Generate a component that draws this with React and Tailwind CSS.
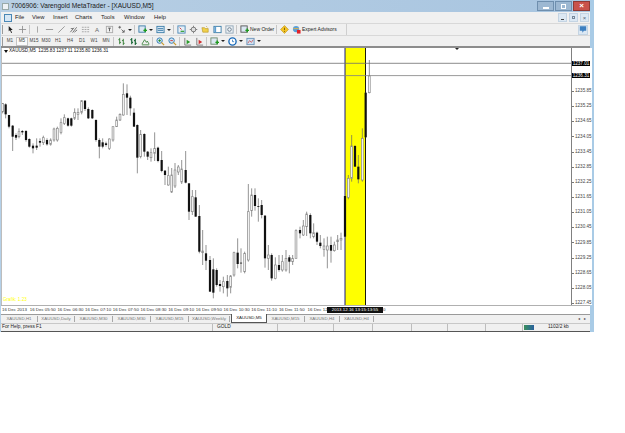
import React from "react";

const A = [[8,85,85,110,115,0],[17,85,88,118,130,1],[27,120,120,155,160,1],[38,150,152,185,228,1],[48,175,180,188,195,1],[57,160,170,185,190,0],[67,165,168,172,180,1],[78,165,168,195,200,1],[88,190,192,215,218,1],[99,205,212,220,235,1],[110,190,212,218,225,1],[120,190,198,203,215,1],[130,182,188,203,210,0],[141,190,195,208,212,1],[152,190,195,208,212,0],[162,158,162,195,200,0],[172,155,160,195,200,0],[183,130,143,172,178,0],[193,118,128,145,150,0],[204,128,130,152,155,1],[214,128,130,152,155,1],[224,100,112,130,135,0],[234,100,112,118,135,0],[245,75,77,112,118,0],[255,75,77,102,108,1],[265,97,102,130,132,1],[277,103,105,130,132,1],[288,133,135,195,200,1],[298,190,195,215,250,1],[308,190,202,215,220,1],[318,200,205,210,215,1],[328,190,192,220,225,0],[339,155,155,195,200,0],[350,125,135,155,155,0],[360,115,118,135,138,0],[370,25,58,120,122,0],[381,28,55,68,120,1],[391,62,68,100,122,1],[402,100,113,155,155,1],[412,148,150,248,295,1],[422,165,178,245,250,0],[433,175,177,230,245,1],[443,228,230,245,255,1],[453,220,233,248,260,0],[464,172,220,235,258,0],[474,215,218,258,262,1],[485,228,255,288,292,1],[495,285,287,300,330,1],[505,275,302,330,332,0]];
const B = [[47,-57,0,38,40,1],[57,40,40,125,150,1],[67,60,80,125,135,0],[77,60,82,140,140,1],[88,105,138,245,250,1],[98,180,243,248,285,0],[108,225,250,272,300,1],[120,258,270,365,365,1],[130,265,298,368,385,1],[140,295,300,345,350,1],[150,330,342,348,365,1],[160,320,335,350,370,0],[172,315,333,355,380,1],[182,315,318,352,370,0],[192,245,248,315,320,0],[203,205,248,282,295,1],[213,235,278,280,308,1],[224,245,250,305,310,0],[235,42,125,270,275,0],[245,55,75,122,140,0],[255,55,75,108,122,1],[265,85,108,108,155,1],[275,90,105,135,145,1],[285,135,137,265,293,1],[295,225,255,265,300,0],[305,250,255,325,332,1],[316,262,285,325,328,0],[327,255,285,300,305,1],[337,255,275,300,305,0],[348,240,265,300,305,0],[358,255,262,275,310,1],[368,255,265,275,285,0],[378,178,182,265,265,0],[390,170,180,190,205,1],[400,150,168,195,198,0],[410,125,132,170,198,0],[421,130,135,190,205,1],[431,160,188,200,205,0],[441,185,188,215,225,1],[451,195,218,228,235,1],[462,205,228,238,260,0],[472,200,228,240,295,0],[483,200,225,242,278,1],[493,215,225,242,245,0],[503,195,210,215,240,0],[513,188,205,210,240,0]];
const C = [[45,438,438,560,560,1],[55,375,385,442,448,0],[65,255,288,385,395,0],[75,285,288,350,350,1],[85,315,350,388,400,1],[97,235,265,390,395,0],[107,128,128,262,262,1],[118,30,78,128,130,0]];
const ABS = [[171.7,168,175,192,193,0],[175,163,170,186,188,0],[178.3,165,167,172,175,0],[181.7,160,169,182,184,0]];
const conv = (arr, ox, oy) => arr.map(([x, h, t, b, l, k]) => [ox + x / 3, oy + h / 3, oy + t / 3, oy + b / 3, oy + l / 3, k]);
const candles = [...conv(A, 0, 75), ...ABS, ...conv(B, 170, 170), ...conv(C, 330, 50)];

function Chart() {
  return (
    <svg className="block w-full h-full" viewBox="2 48 569 257" preserveAspectRatio="none">
      <rect x="345" y="48" width="20.5" height="257" fill="#ffff00" />
      <line x1="345" x2="345" y1="48" y2="305" stroke="#000080" strokeWidth="0.9" />
      <line x1="365.5" x2="365.5" y1="48" y2="305" stroke="#000" strokeWidth="0.9" />
      <line x1="2" x2="571" y1="63.3" y2="63.3" stroke="#6e6e6e" strokeWidth="0.8" />
      <line x1="2" x2="571" y1="75.6" y2="75.6" stroke="#808080" strokeWidth="0.8" />
      <path d="M455 48h4l-2 2z" fill="#222" />
      {candles.map(([x, h, t, b, l, k], i) => (
        <g key={i}>
          <line x1={x} x2={x} y1={h} y2={l} stroke="#666" strokeWidth="0.7" />
          {k ? (
            <rect x={x - 1.1} y={t} width="2.2" height={Math.max(b - t, 0.8)} fill="#111" />
          ) : (
            <rect x={x - 0.9} y={t} width="1.8" height={Math.max(b - t, 0.8)} fill="#fff" stroke="#888" strokeWidth="0.7" />
          )}
        </g>
      ))}
    </svg>
  );
}

const S = ({ children }) => (
  <svg viewBox="0 0 10 10" className="w-[9px] h-[9px] block" fill="none">{children}</svg>
);
const bars = <path d="M3 1v7M3 3H1.5M3 6h1.5M7 2v7M7 4H5.5M7 7h1.5" stroke="#2f7a2f" strokeWidth="1" />;
const doc = (c) => <><rect x="1" y="1" width="7" height="7" fill="#dbe7f2" stroke={c} /><path d="M6 6h4M8 4v4" stroke="#1e9b1e" strokeWidth="1.6" /></>;
const I = {
  cursor: <path d="M3 1l4.5 4.5H5.4l1.3 3-1 .4-1.2-3L3 7z" fill="#222" />,
  cross: <path d="M5 1v8M1 5h8" stroke="#888" strokeWidth="0.9" />,
  v: <path d="M5 1.5v7" stroke="#999" strokeWidth="0.9" />,
  h: <path d="M1 5h8" stroke="#888" strokeWidth="0.9" />,
  d: <path d="M1.5 8.5l7-7" stroke="#888" strokeWidth="0.9" />,
  fork: <path d="M1.5 8l4-5M4 8.5l4.5-6M6 8l3-2.5M2 4h3" stroke="#777" strokeWidth="1.1" />,
  grid: <path d="M1 2.5h8M1 5h8M1 7.5h8" stroke="#999" strokeWidth="0.9" strokeDasharray="2 1" />,
  tb: <><rect x="1.5" y="1.5" width="7" height="7" stroke="#aaa" /><path d="M3.5 3.5h3M5 3.5v3.5" stroke="#555" /></>,
  shapes: <path d="M1.5 2.5h3M3 1v3M5 5l3 3M8 5.5v2.5H5.5" stroke="#555" strokeWidth="0.9" />,
  newchart: doc("#3a7ca8"),
  profiles: <><rect x="1" y="1.5" width="8" height="7" fill="#d6e6f5" stroke="#3a7ca8" /><path d="M2 4h6M2 6h6" stroke="#3a7ca8" /></>,
  mw: <><rect x="1" y="1" width="8" height="8" fill="#e6f0f8" stroke="#4a87b5" /><path d="M3 3l2 2" stroke="#c33" /><path d="M4 7h4" stroke="#2a9a2a" strokeWidth="1.3" /></>,
  nav: <><circle cx="5" cy="5" r="2.6" fill="#ddd" stroke="#777" /><path d="M5 .8v2M5 7.2v2M.8 5h2M7.2 5h2" stroke="#777" /></>,
  folder: <><path d="M1 3h3l1 1h3v4H2z" fill="#f0d04a" stroke="#b9962a" strokeWidth="0.7" /><path d="M6 1.5l1 1" stroke="#c9a22a" /></>,
  win: <><rect x="1" y="1.5" width="8" height="7" fill="#fff" stroke="#3a7ca8" /><rect x="1.5" y="2" width="2" height="6" fill="#5f9fd0" /></>,
  search: <><rect x="1" y="1" width="8" height="8" fill="#eef3f7" stroke="#8fa5b5" /><circle cx="5" cy="5" r="2" stroke="#678" /></>,
  order: doc("#555"),
  diamond: <><path d="M5 .6l4.4 4.4L5 9.4.6 5z" fill="#f5c525" stroke="#b48a12" strokeWidth="0.6" /><path d="M5 3v2.6M5 6.6v1" stroke="#7a5a08" /></>,
  ea: <><circle cx="4.5" cy="4.5" r="3.5" fill="#5aa0d8" /><path d="M1.5 4h6" stroke="#e8b040" /><rect x="5.5" y="5.5" width="4" height="4" fill="#e0222a" /></>,
  bar: bars,
  bar2: <path d="M3 1v7M3 3H1.5M3 6h1.5M7 2v7M7 4H5.5M7 7h1.5" stroke="#1e6a3a" strokeWidth="1.3" />,
  line: <path d="M1 8l3-5 2 3 1-1.5L9 8M1 8.7h8" stroke="#2f7a2f" strokeWidth="0.9" />,
  zin: <><circle cx="4" cy="4" r="3" fill="#cfe4f5" stroke="#2a76b0" /><path d="M2.6 4h2.8M4 2.6v2.8" stroke="#1e8a1e" /><path d="M6 6l3 3" stroke="#c89a30" strokeWidth="1.4" /></>,
  zout: <><circle cx="4" cy="4" r="3" fill="#cfe4f5" stroke="#2a76b0" /><path d="M2.6 4h2.8" stroke="#c33" /><path d="M6 6l3 3" stroke="#c89a30" strokeWidth="1.4" /></>,
  shift: <><path d="M2 1v8h7" stroke="#666" strokeWidth="0.9" /><path d="M4 3l4 2.5L4 8z" fill="#2a9a2a" /></>,
  auto: <><path d="M2 1v8h7" stroke="#666" strokeWidth="0.9" /><path d="M4 3l4 2.5L4 8z" fill="#d03030" /></>,
  ind: doc("#6a8a6a"),
  clock: <><circle cx="5" cy="5" r="4" fill="#fff" stroke="#1668b8" strokeWidth="1.5" /><path d="M5 3v2.2h1.8" stroke="#1668b8" strokeWidth="0.8" /></>,
  tmpl: <><rect x="1" y="1.5" width="8" height="7" fill="#cfe2f3" stroke="#6a94b8" /><path d="M2 7l2-3 2 2 2-3" stroke="#c44" strokeWidth="0.8" /></>,
  chat: <path d="M1 1h8v5.5H6L4.5 9 4 6.5H1z" fill="#3d7fc0" />,
};

const T = ({ i }) => <div className="w-[12px] h-full flex items-center justify-center shrink-0"><S>{I[i]}</S></div>;
const Sep = () => <div className="w-[1px] h-[9px] bg-[#c6c6c6] mx-[1px] shrink-0" />;
const Drop = () => <div className="w-[5px] flex justify-center shrink-0 mr-[1px]"><div className="border-x-[2px] border-t-[2px] border-x-transparent border-t-[#222]" /></div>;
const Grip = () => <div className="w-[1px] h-[9px] bg-[#9a9a9a] mx-[1px] shrink-0" />;

const PRICES = ["1235.85","1235.25","1234.65","1234.05","1233.45","1232.85","1232.25","1231.65","1231.05","1230.45","1229.85","1229.25","1228.65","1228.05","1227.45"];
const TIMES = ["16 Dec 2013","16 Dec 05:50","16 Dec 06:30","16 Dec 07:10","16 Dec 07:50","16 Dec 08:30","16 Dec 09:10","16 Dec 09:50","16 Dec 10:30","16 Dec 11:10","16 Dec 11:50"];
const TABS = [["XAUUSD,H1","w-[37px]"],["XAUUSD,Daily","w-[37px]"],["XAUUSD,M30","w-[38px]"],["XAUUSD,M30","w-[38px]"],["XAUUSD,M15","w-[38px]"],["XAUUSD,Weekly","w-[41px]"]];
const TFS = ["M1","M5","M15","M30","H1","H4","D1","W1","MN"];
const STATUS = ["w-[212px]","w-[65px]","w-[56px]","w-[39px]","w-[39px]","w-[36px]","w-[38px]","w-[37px]"];
const font = "font-['Liberation_Sans',Arial,sans-serif]";

export default function App() {
  return (
    <div className={`w-[625px] h-[433px] bg-white overflow-hidden ${font}`}>
      <div className="w-[594px] h-[332px] bg-[#b4d0e8] flex flex-col border-r-[4px] border-[#a9cbe6]">
        {/* title */}
        <div className="h-[12px] shrink-0 flex items-center bg-gradient-to-r from-[#b8cfe4] to-[#a8c5e0] pl-[2px]">
          <div className="w-[7px] h-[7px] bg-[#eef2f6] border border-[#9aa] mr-[2px]" />
          <span className="text-[6.6px] leading-none text-[#1a1a1a] whitespace-nowrap">7006906: Varengold MetaTrader - [XAUUSD,M5]</span>
          <div className="ml-auto flex h-[10px] mr-[0px] gap-[1px]">
            <div className="w-[17px] bg-[#9db8d2] border border-[#6f8fae] flex items-center justify-center"><div className="w-[6px] h-[2px] mt-[3px] bg-white" /></div>
            <div className="w-[17px] bg-[#9db8d2] border border-[#6f8fae] flex items-center justify-center"><div className="w-[5px] h-[5px] border border-white" /></div>
            <div className="w-[17px] bg-[#c9524a] border border-[#8f3a35] flex items-center justify-center text-white text-[8px] leading-none font-bold">×</div>
          </div>
        </div>
        {/* menu */}
        <div className="h-[11px] shrink-0 ml-[1px] bg-[#f0f0f0] flex items-center text-[5.8px] text-[#222] leading-none">
          <div className="w-[13px] flex justify-center"><div className="w-[8px] h-[8px] bg-[#d7e7f5] border border-[#4a87b5]" /></div>
          <span className="w-[18px] pl-[1px]">File</span>
          <span className="w-[21px]">View</span>
          <span className="w-[22px]">Insert</span>
          <span className="w-[26px]">Charts</span>
          <span className="w-[23px]">Tools</span>
          <span className="w-[30px]">Window</span>
          <span>Help</span>
          <div className="ml-auto flex gap-[2px] mr-[1px]">
            <div className="w-[9px] h-[9px] bg-[#dce8f3] border border-[#c4d4e3] flex items-end justify-center pb-[1px]"><div className="w-[3px] h-[1px] bg-[#444]" /></div>
            <div className="w-[9px] h-[9px] bg-[#dce8f3] border border-[#c4d4e3] flex items-center justify-center"><div className="w-[3px] h-[3px] border border-[#789]" /></div>
            <div className="w-[9px] h-[9px] bg-[#dce8f3] border border-[#c4d4e3] flex items-center justify-center text-[6px] text-[#567]">×</div>
          </div>
        </div>
        {/* toolbar 1 */}
        <div className="h-[12px] shrink-0 ml-[1px] bg-[#f0f0f0] border-t border-[#d8d8d8] flex items-center">
          <Grip />
          <T i="cursor" /><T i="cross" /><Sep /><T i="v" /><T i="h" /><T i="d" /><T i="fork" /><T i="grid" />
          <div className="w-[12px] text-center text-[6px] text-[#666] leading-none shrink-0">A</div>
          <T i="tb" /><T i="shapes" /><Drop /><Sep />
          <T i="newchart" /><Drop /><T i="profiles" /><Drop /><Sep />
          <T i="mw" /><T i="nav" /><T i="folder" /><T i="win" /><T i="search" /><Sep />
          <T i="order" />
          <span className="text-[5px] leading-none text-[#222] whitespace-nowrap w-[25px] shrink-0">New Order</span>
          <Sep /><T i="diamond" /><T i="ea" />
          <span className="text-[5px] leading-none text-[#222] whitespace-nowrap w-[44px] shrink-0">Expert Advisors</span>
          <div className="w-[1px] h-full bg-[#cfcfcf]" />
          <div className="ml-auto mr-[2px] w-[10px] h-[10px] bg-[#dce8f3] border border-[#c4d4e3] flex items-center justify-center"><S>{I.chat}</S></div>
        </div>
        {/* toolbar 2 */}
        <div className="h-[11px] shrink-0 ml-[1px] bg-[#f0f0f0] border-t border-[#d8d8d8] flex items-center">
          <Grip />
          {TFS.map((t) => (
            <div key={t} className={`w-[12px] h-[9px] shrink-0 flex items-center justify-center text-[4.6px] leading-none text-[#444] ${t === "M5" ? "bg-[#fafafa] border border-[#c4c4c4]" : ""}`}>{t}</div>
          ))}
          <Sep />
          <T i="bar" /><T i="bar2" /><T i="line" /><Sep />
          <T i="zin" /><T i="zout" /><Sep />
          <T i="shift" /><T i="auto" /><Sep />
          <T i="ind" /><Drop /><T i="clock" /><Drop /><T i="tmpl" /><Drop />
        </div>
        {/* chart */}
        <div className="h-[259px] shrink-0 ml-[1px] flex border-t-2 border-[#8c8c8c] bg-white">
          <div className="w-[571px] shrink-0 h-[257px] border-l border-r border-[#808080] border-l-[#bdbdbd] relative">
            <Chart />
            <div className="absolute left-[2px] top-[1px] flex items-center gap-[1px] text-[4.6px] leading-none text-[#111] whitespace-nowrap">
              <span className="border-x-[2px] border-t-[3px] border-x-transparent border-t-[#111]" />
              <span>XAUUSD,M5 &nbsp;1235.83 1237.11 1235.80 1236.31</span>
            </div>
            <div className="absolute left-[1px] bottom-[2px] text-[4.6px] leading-none text-[#ffff00] whitespace-nowrap">Grafik: 1.23</div>
          </div>
          <div className="flex-1 relative bg-white">
            <div className="flex flex-col pt-[38.5px] gap-[5.15px]">
              {PRICES.map((p) => (
                <div key={p} className="h-[10px] flex items-center text-[4.6px] leading-none text-[#444]">
                  <div className="w-[2px] h-[1px] bg-[#777] mr-[1px]" />{p}
                </div>
              ))}
            </div>
            <div className="absolute left-[0px] top-[13px] w-[18px] h-[5px] bg-black text-white text-[4.6px] leading-[5px] text-center">1237.01</div>
            <div className="absolute left-[0px] top-[25px] w-[18px] h-[5px] bg-black text-white text-[4.6px] leading-[5px] text-center">1236.31</div>
          </div>
        </div>
        {/* time axis */}
        <div className="h-[9px] shrink-0 ml-[1px] bg-white border-t border-[#b0b0b0] flex items-center text-[4.4px] leading-none text-[#333] whitespace-nowrap relative">
          <div className="w-[1px] shrink-0" />
          {TIMES.map((t) => <div key={t} className="w-[27.7px] shrink-0">{t}</div>)}
          <div className="pl-[1px]">16 Dec 12:</div>
          <div className="absolute left-[326px] top-[1px] w-[56px] h-[6px] bg-[#111] text-white text-[4.4px] leading-[6px] text-center overflow-hidden">2013.12.16 13:15:13:55</div>
          <span className="absolute left-[382px] top-[2px]">0</span>
        </div>
        {/* tabs */}
        <div className="h-[9px] shrink-0 ml-[1px] bg-[#f0f0f0] border-t border-[#9a9a9a] flex items-center text-[4.4px] leading-none text-[#777] whitespace-nowrap">
          {TABS.map(([t, w], i) => (
            <div key={i} className={`${w} h-[6px] shrink-0 flex items-center justify-center border-r border-[#a8a8a8]`}>{t}</div>
          ))}
          <div className="w-[36px] h-[9px] -mt-[1px] shrink-0 ml-[1px] bg-white border-x border-b border-[#555] flex items-center justify-center text-[#222]">XAUUSD,M5</div>
          <div className="w-[38px] h-[6px] shrink-0 flex items-center justify-center border-r border-[#a8a8a8]">XAUUSD,M15</div>
          <div className="w-[35px] h-[6px] shrink-0 flex items-center justify-center border-r border-[#a8a8a8]">XAUUSD,H4</div>
          <div className="w-[34px] h-[6px] shrink-0 flex items-center justify-center border-r border-[#a8a8a8]">XAUUSD,H4</div>
          <div className="ml-auto mr-[4px] flex gap-[4px] text-[#444] text-[4px]"><span>◂</span><span>▸</span></div>
        </div>
        {/* status */}
        <div className="h-[9px] shrink-0 ml-[1px] bg-[#f0f0f0] border-y border-[#c8c8c8] border-b-[#555] flex items-center text-[4.8px] leading-none text-[#222] whitespace-nowrap">
          {STATUS.map((w, i) => (
            <div key={i} className={`${w} h-full shrink-0 border-r border-[#bdbdbd] flex items-center pl-[1px]`}>
              {i === 0 ? "For Help, press F1" : i === 1 ? <span className="pl-[3px]">GOLD</span> : ""}
            </div>
          ))}
          <div className="w-[10px] h-[5px] shrink-0 ml-[1px] bg-gradient-to-r from-[#3e8f5a] to-[#2b5f9c]" />
          <span className="ml-[14px] text-[4.8px]">1102/2 kb</span>
        </div>
      </div>
    </div>
  );
}
